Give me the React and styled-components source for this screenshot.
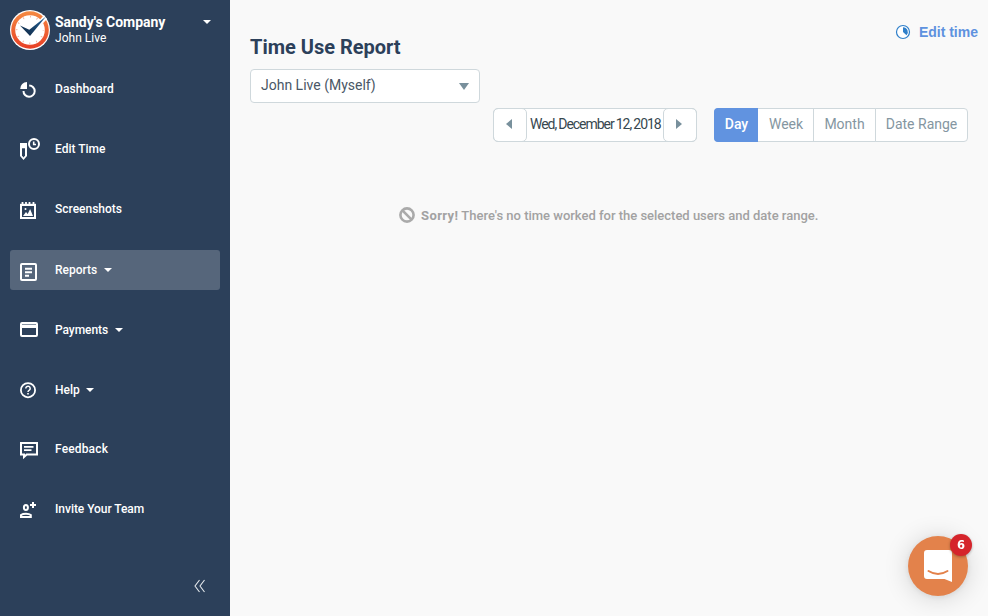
import React from "react";
import styled, { createGlobalStyle } from "styled-components";

const GlobalStyle = createGlobalStyle`
  * { box-sizing: border-box; }
  body { margin: 0; background: #f9f9f9; font-family: Roboto, "Liberation Sans", sans-serif; }
  button { font: inherit; color: inherit; background: none; border: 0; padding: 0; margin: 0; text-align: left; white-space: nowrap; }
  svg { display: block; flex: none; }
`;

const Page = styled.div`
  display: flex;
  height: 616px;
  overflow: hidden;
`;

const Sidebar = styled.aside`
  width: 230px;
  flex: none;
  display: flex;
  flex-direction: column;
  background: #2c405a;
  color: #fff;
`;

const Account = styled.header`
  display: flex;
  height: 69px;
  padding: 10px 19px 0 10px;
`;

const AccountNames = styled.div`
  flex: 1;
  padding: 4px 0 0 5px;
  white-space: nowrap;
`;

const Company = styled.div`
  font-size: 14px;
  line-height: 16px;
  font-weight: 700;
  letter-spacing: -0.03px;
`;

const Person = styled.div`
  font-size: 12px;
  line-height: 17px;
  letter-spacing: 0.03px;
`;

const Caret = styled.i`
  width: 0;
  height: 0;
  border: 4px solid transparent;
  border-top-color: currentColor;
  border-bottom-width: 0;
  margin-top: ${(p) => p.$top || 0}px;
`;

const Nav = styled.nav`
  display: flex;
  flex-direction: column;
  padding: 0 10px;
`;

const NavItem = styled.button`
  display: flex;
  align-items: center;
  height: 40px;
  margin-bottom: ${(p) => p.$gap}px;
  border-radius: 3px;
  background: ${(p) => (p.$active ? "#56667b" : "transparent")};
`;

const IconSlot = styled.span`
  width: 45px;
  height: 40px;
  padding: 8px 0 0 9px;
`;

const NavLabel = styled.span`
  font-size: 12px;
  line-height: 16px;
  font-weight: 500;
  letter-spacing: ${(p) => p.$track || 0}px;
  margin-right: 6.5px;
`;

const Collapse = styled.button`
  margin: auto 24px 23px auto;
`;

const Main = styled.main`
  flex: 1;
  display: flex;
  flex-direction: column;
  padding: 0 10px 0 20px;
`;

const TitleRow = styled.div`
  display: flex;
  justify-content: space-between;
  height: 69px;
`;

const Title = styled.h1`
  margin: 35px 0 0;
  color: #2c405a;
  font-size: 20px;
  line-height: 24px;
  font-weight: 700;
  letter-spacing: -0.01px;
`;

const EditLink = styled.button`
  display: flex;
  align-items: center;
  height: 20px;
  margin-top: 22px;
  gap: 8px;
  color: #5e92df;
  font: bold 14px/20px "Liberation Sans", Arial, sans-serif;
`;

const UserSelect = styled.button`
  display: flex;
  align-items: center;
  justify-content: space-between;
  width: 230px;
  height: 34px;
  padding: 0 10px;
  border: 1px solid #cfd8dc;
  border-radius: 4px;
  background: #fff;
  color: #4a5766;
  font-size: 14px;
`;

const SelectedUser = styled.span`
  padding-bottom: 2px;
`;

const Controls = styled.div`
  display: flex;
  justify-content: flex-end;
  height: 34px;
  margin-top: 5px;
  padding-right: 10px;
  gap: 17px;
`;

const DatePicker = styled.div`
  display: flex;
  width: 204px;
  border: 1px solid #cfd8dc;
  border-radius: 5px;
  background: #fff;
`;

const StepButton = styled.button`
  display: flex;
  align-items: center;
  justify-content: center;
  width: 34px;
  margin: -1px;
  padding: 0 2px 2px 0;
  flex: none;
  border: 1px solid #cfd8dc;
  border-radius: 5px;
  &:last-child { padding-right: 3px; }
`;

const DateText = styled.span`
  flex: 1;
  min-width: 0;
  padding-left: 4px;
  color: #37474f;
  font-size: 14px;
  line-height: 31px;
  letter-spacing: -0.58px;
  word-spacing: -0.2px;
  white-space: nowrap;
  letter-spacing: -1.05px;
`;

const Ranges = styled.div`
  display: flex;
  width: 254px;
`;

const RangeButton = styled.button`
  width: ${(p) => p.$width}px;
  margin-right: -1px;
  padding-bottom: 2px;
  flex: none;
  border: 1px solid ${(p) => (p.$active ? "#6193e0" : "#cfd8dc")};
  background: ${(p) => (p.$active ? "#6193e0" : "#fff")};
  color: ${(p) => (p.$active ? "#fff" : "#8496a1")};
  font-size: 14px;
  line-height: 30px;
  font-weight: ${(p) => (p.$active ? 500 : 400)};
  text-align: center;
  &:first-child { border-radius: 4px 0 0 4px; margin-right: 0; border-right: 0; }
  &:nth-child(2) { border-left: 0; padding-left: 1px; }
  &:last-child { border-radius: 0 4px 4px 0; margin-right: 0; }
`;

const EmptyMessage = styled.p`
  display: flex;
  align-items: center;
  margin: 63px 0 0 149px;
  height: 20px;
  gap: 6px;
  color: #a2a2a2;
  font-size: 13px;
  font-weight: 500;
  white-space: nowrap;
`;

const MessageText = styled.span`
  padding-top: 1px;
  letter-spacing: -0.01px;
  b { font-weight: 700; letter-spacing: 0.4px; }
`;

const Launcher = styled.button`
  position: fixed;
  right: 20px;
  bottom: 20px;
  width: 60px;
  height: 60px;
  border-radius: 50%;
  background: #e3824b;
  box-shadow: 0 1px 6px rgba(0, 0, 0, 0.08), 0 2px 26px rgba(0, 0, 0, 0.16);
`;

const Badge = styled.span`
  position: absolute;
  top: -2px;
  right: -4px;
  width: 22px;
  height: 22px;
  border-radius: 50%;
  background: #d5242b;
  box-shadow: 0 1px 3px rgba(0, 0, 0, 0.3);
  color: #fff;
  font: 700 11.5px/22px "DejaVu Sans", sans-serif;
  text-align: center;
`;

const Glyph = ({ children }) => (
  <svg width="24" height="24" viewBox="0 0 24 24" fill="none" stroke="#fff" strokeWidth="2">
    {children}
  </svg>
);

const icons = {
  dashboard: (
    <Glyph>
      <path d="M8 12V5A7 7 0 0 0 1.200 12z" fill="#fff" stroke="none" />
      <path d="M10.200 8.500A5.600 5.600 0 1 1 4.500 14" />
    </Glyph>
  ),
  edit: (
    <Glyph>
      <path d="M1 6h7v13L4.5 23 1 19z" fill="#fff" stroke="none" />
      <path d="M3 11.3h3v7.3L4.5 20.400 3 18.600z" fill="#2c405a" stroke="none" />
      <circle cx="15" cy="7" r="5" />
      <path d="M14.7 4.5v3H17" strokeWidth="1.6" />
    </Glyph>
  ),
  screenshots: (
    <Glyph>
      <path d="M2 8v13h14V8z" />
      <path d="M1 7.800h16" />
      <path d="M3.500 5v3M7 5v3M10.500 5v3M14.500 5v3" strokeWidth="1.8" />
      <path d="M4 19l3-4 1.7 2 2.4-5L14 19z" fill="#fff" stroke="none" />
      <circle cx="6.500" cy="12" r="1" fill="#fff" stroke="none" />
    </Glyph>
  ),
  reports: (
    <Glyph>
      <rect x="2" y="6" width="15" height="16" rx="1" />
      <path d="M6 10.8h7M6 14.2h7M6 17.7h4" strokeWidth="1.9" />
    </Glyph>
  ),
  payments: (
    <Glyph>
      <rect x="2" y="5" width="16" height="13" rx="1" />
      <path d="M2 8.500h16" strokeWidth="3" />
      <path d="M3 6.500h14" stroke="#8894a4" strokeWidth="1" />
    </Glyph>
  ),
  help: (
    <Glyph>
      <circle cx="9" cy="12.200" r="7.100" strokeWidth="1.8" />
      <path d="M6.8 10.500a2.200 2.200 0 1 1 3.500 1.700c-.9.6-1.300.9-1.300 1.800" strokeWidth="1.5" />
      <path d="M8.200 15h1.600v1.600H8.200z" fill="#fff" stroke="none" />
    </Glyph>
  ),
  feedback: (
    <Glyph>
      <path d="M2 6h16v11.500H7.700L5 20V17.500H2z" />
      <path d="M5 9.800h9.500M5 13.200h7.500" strokeWidth="1.8" />
    </Glyph>
  ),
  invite: (
    <Glyph>
      <ellipse cx="6.9" cy="10.500" rx="2" ry="2.500" />
      <path d="M2 20v-2C3.500 16.900 5 16.700 7 16.700s3.500.2 4.800 1.300V20z" />
      <path d="M14 5v6M11 8h6" />
    </Glyph>
  ),
};

const navItems = [
  { id: "dashboard", label: "Dashboard", gap: 20, track: 0.08 },
  { id: "edit", label: "Edit Time", gap: 20, track: 0 },
  { id: "screenshots", label: "Screenshots", gap: 21, track: 0 },
  { id: "reports", label: "Reports", gap: 20, menu: true, active: true, track: 0.01 },
  { id: "payments", label: "Payments", gap: 20, menu: true, track: -0.06 },
  { id: "help", label: "Help", gap: 19, menu: true, track: 0.01 },
  { id: "feedback", label: "Feedback", gap: 20, track: 0.15 },
  { id: "invite", label: "Invite Your Team", gap: 0, track: -0.05 },
];

const ranges = [
  { label: "Day", width: 44, active: true },
  { label: "Week", width: 56 },
  { label: "Month", width: 63 },
  { label: "Date Range", width: 93 },
];

const Logo = () => (
  <svg width="40" height="40" viewBox="0 0 40 40">
    <defs>
      <linearGradient id="ring" x1="0" y1="0" x2="0" y2="1">
        <stop offset="0" stopColor="#f58a42" />
        <stop offset="1" stopColor="#e83f25" />
      </linearGradient>
      <linearGradient id="hand" x1="0" y1="1" x2="1" y2="0">
        <stop offset="0" stopColor="#102641" />
        <stop offset="1" stopColor="#24649a" />
      </linearGradient>
    </defs>
    <circle cx="20" cy="20" r="20" fill="#fff" />
    <circle cx="20" cy="20" r="18.8" fill="url(#ring)" />
    <circle cx="20" cy="20" r="14.800" fill="#fff" />
    <circle cx="20" cy="20" r="13.300" fill="none" stroke="#f2a48a" strokeWidth="1.800" strokeDasharray="0.8 6.164" strokeDashoffset="0.4" />
    <path d="M21 20L34 5l3 4-14 15z" fill="#fff" />
    <path d="M10 15.500l9.300 4.200L36 6.500 20 26z" fill="url(#hand)" />
  </svg>
);

export default function App() {
  return (
    <Page>
      <GlobalStyle />
      <Sidebar>
        <Account>
          <Logo />
          <AccountNames>
            <Company>Sandy's Company</Company>
            <Person>John Live</Person>
          </AccountNames>
          <Caret $top={10} />
        </Account>
        <Nav>
          {navItems.map((item) => (
            <NavItem key={item.id} $gap={item.gap} $active={item.active}>
              <IconSlot>{icons[item.id]}</IconSlot>
              <NavLabel $track={item.track}>{item.label}</NavLabel>
              {item.menu && <Caret />}
            </NavItem>
          ))}
        </Nav>
        <Collapse aria-label="Collapse sidebar">
          <svg width="12" height="14" viewBox="0 0 12 14" fill="none" stroke="#e4e8ec" strokeWidth="1.1">
            <path d="M5.5 1L1 7l4.5 6M10.5 1L6 7l4.5 6" />
          </svg>
        </Collapse>
      </Sidebar>
      <Main>
        <TitleRow>
          <Title>Time Use Report</Title>
          <EditLink>
            <svg width="16" height="16" viewBox="0 0 16 16">
              <circle cx="8" cy="8" r="6.500" fill="#fff" stroke="#2f7fca" strokeWidth="1.2" />
              <path d="M8 8V3.200A4.800 4.800 0 0 1 11.500 11.300z" fill="#2f7fca" />
            </svg>
            Edit time
          </EditLink>
        </TitleRow>
        <UserSelect>
          <SelectedUser>John Live (Myself)</SelectedUser>
          <svg width="10" height="7" viewBox="0 0 10 7"><path d="M0 0h10L5 7z" fill="#78909c" /></svg>
        </UserSelect>
        <Controls>
          <DatePicker>
            <StepButton aria-label="Previous day">
              <svg width="6" height="10" viewBox="0 0 6 10"><path d="M6 0v10L0 5z" fill="#78909c" /></svg>
            </StepButton>
            <DateText>Wed, December 12, 2018</DateText>
            <StepButton aria-label="Next day">
              <svg width="6" height="10" viewBox="0 0 6 10"><path d="M0 0v10l6-5z" fill="#78909c" /></svg>
            </StepButton>
          </DatePicker>
          <Ranges>
            {ranges.map((r) => (
              <RangeButton key={r.label} $width={r.width} $active={r.active}>{r.label}</RangeButton>
            ))}
          </Ranges>
        </Controls>
        <EmptyMessage>
          <svg width="16" height="16" viewBox="0 0 16 16" fill="none" stroke="#aaa" strokeWidth="2.6">
            <circle cx="8" cy="8" r="6.600" />
            <path d="M3.400 3.400l9.200 9.200" />
          </svg>
          <MessageText><b>Sorry!</b> There's no time worked for the selected users and date range.</MessageText>
        </EmptyMessage>
      </Main>
      <Launcher aria-label="Open messages">
        <svg width="60" height="60" viewBox="0 0 60 60">
          <path d="M19 14h22a3 3 0 0 1 3 3v29l-7.500-3H19a3 3 0 0 1-3-3V17a3 3 0 0 1 3-3z" fill="#fff" />
          <path d="M20.500 35q9.500 6 19 0" fill="none" stroke="#e3824b" strokeWidth="2" strokeLinecap="round" />
        </svg>
        <Badge>6</Badge>
      </Launcher>
    </Page>
  );
}
